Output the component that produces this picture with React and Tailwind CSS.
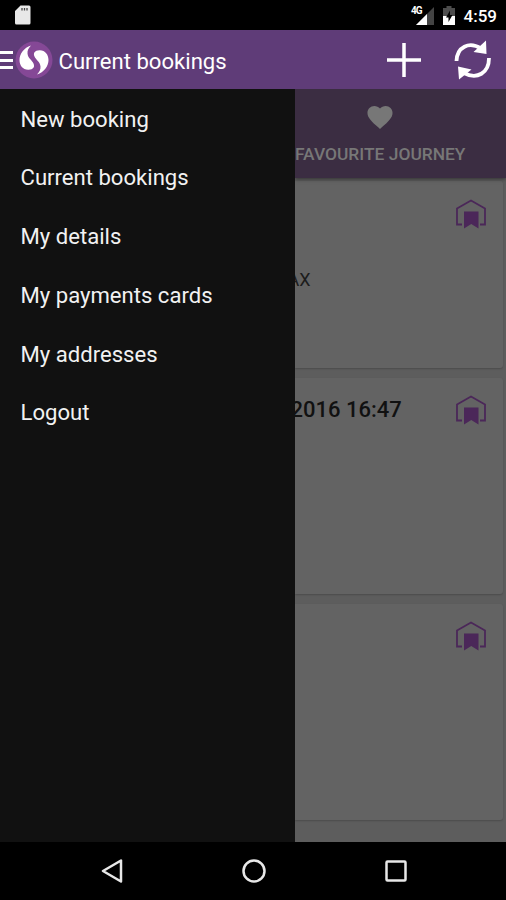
import React from "react";

const MENU = [
  "New booking",
  "Current bookings",
  "My details",
  "My payments cards",
  "My addresses",
  "Logout",
];

const BOOKINGS = [
  { id: 1, date: "", place: "AX", height: "h-[187px]", iconTop: "mt-[18px]" },
  { id: 2, date: "2016 16:47", place: "", height: "h-[216px]", iconTop: "mt-[17px]" },
  { id: 3, date: "", place: "", height: "h-[216px]", iconTop: "mt-[17px]" },
];

function StatusBar() {
  return (
    <div className="flex h-[30px] shrink-0 items-center bg-black pl-[15px] pr-[9px]">
      {/* sd card */}
      <svg viewBox="0 0 16 20" className="h-5 w-4">
        <path d="M5.5 0.5H14a1.5 1.5 0 0 1 1.5 1.5v16a1.5 1.5 0 0 1-1.5 1.5H1.5A1.5 1.5 0 0 1 0 18V6z" fill="#e8e8e8" />
        <path d="M7 3v2.5M9.5 3v2.5M12 3v2.5" stroke="#444" strokeWidth="1.3" />
      </svg>
      <div className="flex-1" />
      <span className="mr-[-6px] mt-[-9px] text-[10px] font-bold leading-none tracking-[-1px] text-white">4G</span>
      <svg viewBox="0 0 18 18" className="mt-[1px] h-[18px] w-[18px]">
        <path d="M18 0v18H0z" fill="#444" />
        <path d="M11 7v11H0z" fill="#fff" />
      </svg>
      <svg viewBox="0 0 12 19" className="ml-[9px] h-[19px] w-3">
        <path d="M3.5 0h5v2H12v8H0V2h3.5z" fill="#4d4d4d" />
        <path d="M0 10h12v9H0z" fill="#fff" />
        <path d="M7 4.5L3 11.5h2.5V16l4-7H7z" fill="#000" />
      </svg>
      <span className="ml-[9px] mt-[2px] text-[17px] font-medium leading-none text-white">4:59</span>
    </div>
  );
}

const SWIRL = "M16 4.5C9 6.5 4.5 13 4.5 19C4.5 24.5 8 29 13.5 28.8C18.500 28.500 20 26 18.500 22.500C17 19 13 17.500 12.500 12.500C12.300 9.500 13.500 7 16 4.500z";

function Logo() {
  return (
    <svg viewBox="0 0 38 38" className="ml-[2px] mt-[1px] h-[38px] w-[38px]">
      <circle cx="19" cy="19" r="18.5" fill="#854896" />
      <g fill="#fff">
        <path d={SWIRL} />
        <path d={SWIRL} transform="rotate(180 19 19)" />
      </g>
    </svg>
  );
}

function AppBar() {
  return (
    <div className="flex h-[59px] shrink-0 items-center bg-[#5f3c78] pr-[14px] text-white">
      <div className="mt-px flex w-[13px] flex-col gap-[4.5px]">
        <div className="h-[3px] bg-white" />
        <div className="h-[3px] bg-white" />
        <div className="h-[3px] bg-white" />
      </div>
      <Logo />
      <h1 className="ml-[5.5px] mt-[3px] flex-1 whitespace-nowrap text-[22.1px] leading-none">Current bookings</h1>
      <svg viewBox="0 0 34 34" className="h-[34px] w-[34px]" stroke="currentColor" strokeWidth="3.5">
        <path d="M17 0v34M0 17h34" />
      </svg>
      <svg viewBox="0 0 38 40" className="ml-[33px] h-10 w-[38px]" fill="none" stroke="currentColor" strokeWidth="3.8">
        <path d="M2.5 21C3 7 15 1 27 8.5" />
        <path d="M35 18c0 15-12 22-25 15" />
        <path d="M32 0.5l0.5 13.5-13-2zM5 39.5L4 26.5l13.500 3z" fill="currentColor" stroke="none" />
      </svg>
    </div>
  );
}

function Drawer() {
  return (
    <nav className="flex w-[295px] shrink-0 flex-col bg-[#111111] pt-[1px]">
      {MENU.map((item) => (
        <a key={item} className="flex h-[58.7px] items-center pl-[20.5px] text-[22.1px] text-[#f2f2f2]">
          {item}
        </a>
      ))}
    </nav>
  );
}

function HomeBookmark() {
  return (
    <svg viewBox="0 0 30 30" className="h-[30px] w-[30px]" fill="none">
      <path d="M6 25.5H1V9.5L15 1.5l14 8v16h-5" stroke="#4b2759" strokeWidth="1.8" />
      <path d="M8 12.5h14.5v17L15.250 25 8 29.5z" fill="#4b2759" />
    </svg>
  );
}

function BookingCard({ booking }) {
  return (
    <div className={`mr-[3px] flex shrink-0 rounded-r-[3px] bg-[#636363] shadow-[0_1px_2px_rgba(0,0,0,0.2)] ${booking.height}`}>
      <div className="flex-1 whitespace-nowrap">
        {booking.date && (
          <div className="-ml-[4.5px] mt-[18px] text-[22px] font-medium leading-[28px] text-[#111]">{booking.date}</div>
        )}
        {booking.place && (
          <div className="-ml-[7.5px] mt-[88px] text-[18px] leading-[22px] text-[#1c1c1c]">{booking.place}</div>
        )}
      </div>
      <div className={`mr-[17px] ${booking.iconTop}`}>
        <HomeBookmark />
      </div>
    </div>
  );
}

function Content() {
  return (
    <main className="flex min-w-0 flex-1 flex-col overflow-hidden bg-[#5d5d5d]">
      <div className="z-10 flex h-[89px] shrink-0 flex-col bg-[#3b2d42] text-[#777] shadow-[0_1px_4px_rgba(0,0,0,0.5)]">
        <svg viewBox="2 3 20 18.35" className="ml-[72px] mt-[17px] h-[23px] w-[26px]" fill="#777">
          <path d="M12 21.35l-1.45-1.32C5.4 15.36 2 12.28 2 8.5 2 5.42 4.42 3 7.5 3c1.74 0 3.41.81 4.5 2.09C13.09 3.81 14.76 3 16.5 3 19.58 3 22 5.42 22 8.5c0 3.78-3.4 6.86-8.55 11.54z" />
        </svg>
        <div className="mt-[14px] whitespace-nowrap text-[17.4px] font-medium leading-[22px]">FAVOURITE JOURNEY</div>
      </div>
      <div className="flex flex-col gap-[10px] pt-[3px]">
        {BOOKINGS.map((b) => (
          <BookingCard key={b.id} booking={b} />
        ))}
      </div>
    </main>
  );
}

function NavBar() {
  return (
    <div className="flex h-[58px] shrink-0 items-center bg-black pl-[101px] text-[#e8e8e8]">
      <svg viewBox="0 0 22 24" className="h-6 w-[22px]" fill="none" stroke="currentColor" strokeWidth="2.5" strokeLinejoin="round">
        <path d="M20 1.5v21L2 12z" />
      </svg>
      <svg viewBox="0 0 24 24" className="ml-[119px] h-6 w-6" fill="none" stroke="currentColor" strokeWidth="2.5">
        <circle cx="12" cy="12" r="10.5" />
      </svg>
      <svg viewBox="0 0 22 22" className="ml-[119px] h-[22px] w-[22px]" fill="none" stroke="currentColor" strokeWidth="2.5">
        <rect x="1.5" y="1.5" width="19" height="19" rx="1" />
      </svg>
    </div>
  );
}

export default function App() {
  return (
    <div className="flex h-[900px] w-[506px] flex-col overflow-hidden bg-black font-[Roboto,sans-serif]">
      <StatusBar />
      <AppBar />
      <div className="flex min-h-0 flex-1">
        <Drawer />
        <Content />
      </div>
      <NavBar />
    </div>
  );
}
